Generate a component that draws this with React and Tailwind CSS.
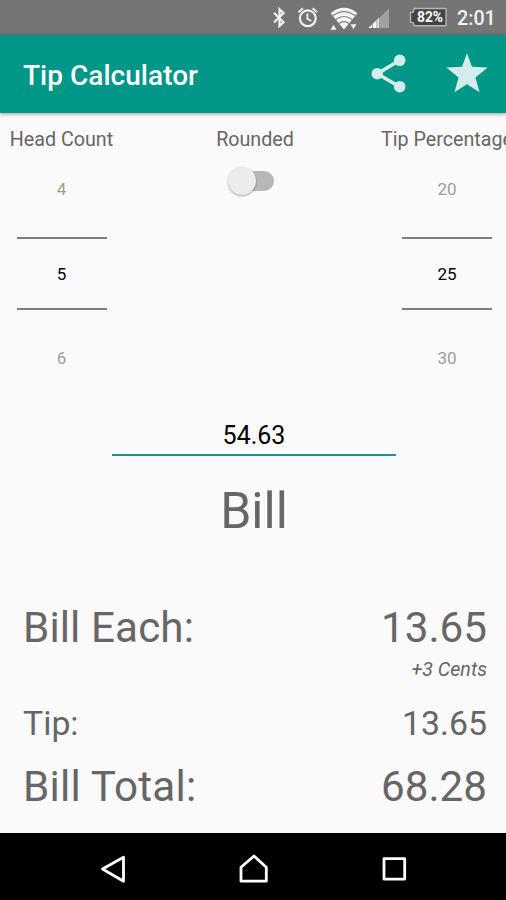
import React, { useState } from "react";

const StatusBar = () => (
  <div className="flex h-[35px] items-center justify-end bg-[#757575] pr-[11px] text-white">
    <svg width="184" height="35" viewBox="0 0 184 35" fill="none">
      {/* bluetooth */}
      <path
        d="M3 12.7 12.5 22.3 8.5 26V9.3L12.5 13 3 22.5"
        stroke="#f2f2f2"
        strokeWidth="2.2"
      />
      {/* alarm */}
      <circle cx="36.8" cy="18.3" r="7.9" stroke="#f0f0f0" strokeWidth="2.2" />
      <path
        d="M36.4 13.5v5.2l3.8 2.3M27.5 12.3l4.4-4M46.1 12.3l-4.4-4"
        stroke="#f0f0f0"
        strokeWidth="1.9"
      />
      {/* wifi */}
      <path d="M59.6 13.2Q73 2.4 86.4 13.2L73 29.5Z" fill="#f4f4f4" />
      <path
        d="M61.8 15.8Q73 7.4 84.2 15.8M64.8 19.6Q73 13.4 81.2 19.6M68 23.4Q73 19.8 78 23.4"
        stroke="#858585"
        strokeWidth="1.2"
      />
      <path d="M59.5 29.7l3-5 3 5zM79.5 24.3h6l-3 5z" fill="#f4f4f4" />
      {/* signal */}
      <path d="M97.5 28 118 8.5V28z" fill="#a0a0a0" />
      <path d="M97.5 28l3.3-3.2V28zM102 28v-4.4l3-2.9V28z" fill="#fff" />
      <path d="M105.5 28v-7.8l2.5-2.4V28z" fill="#d8d8d8" />
      {/* battery */}
      <path
        d="M143.5 8.5H175v17.3h-31.5l-1.5-3.4h-2.5v-10h2.5z"
        fill="#444"
        stroke="#b5b5b5"
        strokeWidth="1.4"
      />
      <text
        x="159"
        y="22"
        textAnchor="middle"
        textLength="26"
        lengthAdjust="spacingAndGlyphs"
        fontSize="14.5"
        fontWeight="700"
        fill="#fff"
      >
        82%
      </text>
    </svg>
    <span className="mt-[2px] ml-[2px] w-[38px] text-right text-[19.7px] leading-none font-medium whitespace-nowrap text-[#f2f2f2]">
      2:01
    </span>
  </div>
);

const AppBar = () => (
  <div className="relative flex h-[78px] items-center bg-[#009688] pl-[23px] text-white shadow-[0_1px_4px_rgba(0,0,0,0.4)]">
    <h1 className="mt-[3px] flex-1 text-[28px] leading-none font-medium tracking-[0.03px]">
      Tip Calculator
    </h1>
    <svg width="136" height="78" viewBox="0 0 136 78" fill="#d2edea">
      <path
        d="M29.7 25.3 7.3 38.7 29.7 51.7"
        fill="none"
        stroke="#d2edea"
        strokeWidth="3.6"
      />
      <circle cx="29.7" cy="25.3" r="5.8" />
      <circle cx="7.3" cy="38.7" r="5.8" />
      <circle cx="29.7" cy="51.7" r="5.8" />
      <path d="M97 18.3l5 13.4 15.7.8-12.3 10 4.2 14.8L97 49.2l-12.6 8.1 4.2-14.8-12.3-10 15.7-.8z" />
    </svg>
  </div>
);

const Picker = ({ values }) => (
  <div className="flex w-[90px] flex-col items-center text-[17px] leading-none">
    <div className="flex h-[84px] items-center pb-[12px] text-[#9d9d9d]">
      {values[0]}
    </div>
    <div className="flex h-[73px] w-full items-center justify-center border-y-[2.5px] border-[#7f7f7f] pt-[1px] text-black">
      {values[1]}
    </div>
    <div className="flex h-[96px] items-center text-[#9d9d9d]">{values[2]}</div>
  </div>
);

const Switch = ({ checked, onChange }) => (
  <button
    className="relative mt-[21px] ml-[2px] h-[20px] w-[37px] rounded-full bg-[#b7b7b7]"
    onClick={() => onChange(!checked)}
  >
    <span className="absolute -top-[4px] -left-[9px] h-7 w-7 rounded-full bg-[#ececec] shadow-[0_1px_2px_rgba(0,0,0,0.35)]" />
  </button>
);

const NavBar = () => (
  <div className="flex h-[67px] items-center justify-center bg-black">
    <svg
      width="310"
      height="67"
      viewBox="0 0 310 67"
      fill="none"
      stroke="#fff"
      strokeWidth="2.8"
      strokeLinejoin="round"
    >
      <path d="M25.5 24.3v24L4.5 36z" />
      <path d="M143 34.2 156 23l12.3 11.2v14H143z" />
      <path d="M286 25.7h20.7v20.4H286z" />
    </svg>
  </div>
);

const App = () => {
  const [rounded, setRounded] = useState(false);

  return (
    <div className="flex h-[900px] w-[506px] flex-col overflow-hidden bg-[#fafafa] font-['Roboto',sans-serif] text-[#666]">
      <StatusBar />
      <AppBar />

      <div className="flex h-[296px] justify-between pt-[17px] text-[19.7px] leading-none">
        <div className="flex w-[123px] flex-col items-center">
          <span className="h-[20px] leading-[20px]">Head Count</span>
          <div className="mt-[3px]">
            <Picker values={[4, 5, 6]} />
          </div>
        </div>
        <div className="ml-[6px] flex flex-col items-center">
          <span className="h-[20px] leading-[20px]">Rounded</span>
          <Switch checked={rounded} onChange={setRounded} />
        </div>
        <div className="flex w-[125px] flex-col">
          <span className="h-[20px] leading-[20px] whitespace-nowrap">
            Tip Percentage
          </span>
          <div className="mt-[3px] ml-[21px]">
            <Picker values={[20, 25, 30]} />
          </div>
        </div>
      </div>

      <div className="flex flex-col items-center pl-[2px]">
        <div className="flex h-[47px] w-[284px] items-center justify-center border-b-[2px] border-[#1f9486] pt-[8px] text-[25px] leading-none text-black">
          54.63
        </div>
        <div className="mt-[30px] text-[50px] leading-[50px]">Bill</div>
      </div>

      <div className="mt-[69px] flex flex-1 flex-col pr-[19px] pl-[23px]">
        <div className="flex justify-between text-[42.2px] leading-[46px]">
          <span className="tracking-[0.1px]">Bill Each:</span>
          <span>13.65</span>
        </div>
        <div className="mt-[8px] text-right text-[19.7px] leading-[22px] italic">
          +3 Cents
        </div>
        <div className="mt-[23px] flex justify-between text-[33.8px] leading-[40px]">
          <span>Tip:</span>
          <span>13.65</span>
        </div>
        <div className="mt-[20px] flex justify-between text-[42.2px] leading-[46px]">
          <span className="tracking-[0.2px]">Bill Total:</span>
          <span>68.28</span>
        </div>
      </div>

      <NavBar />
    </div>
  );
};

export default App;
